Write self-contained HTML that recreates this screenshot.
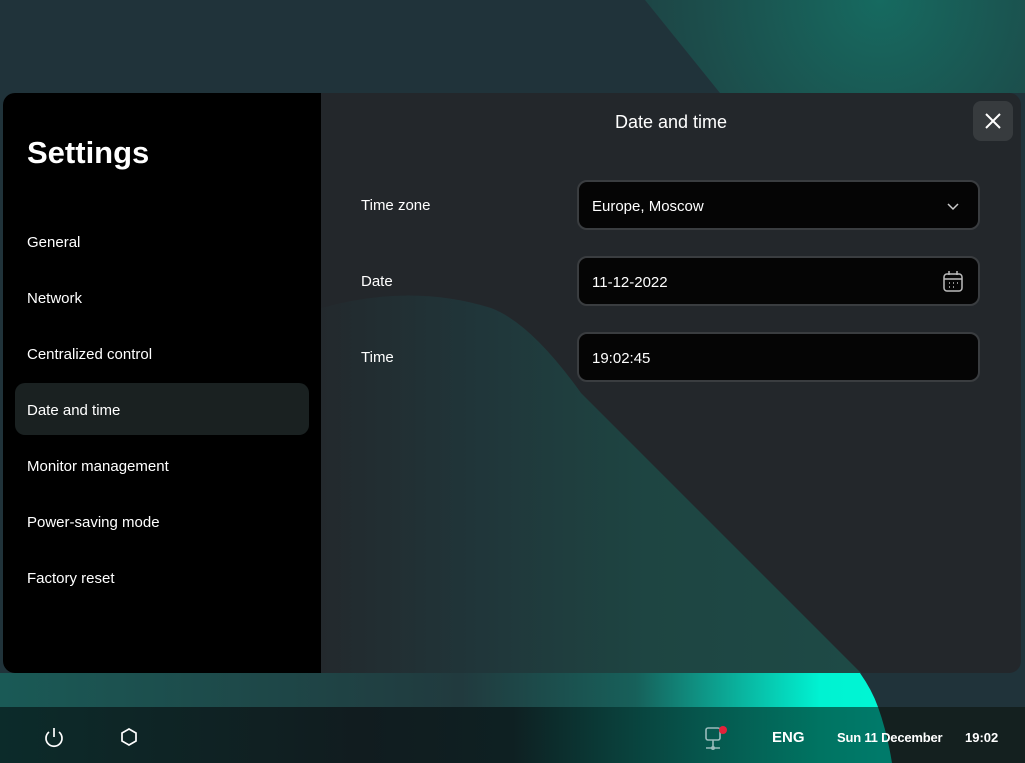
<!DOCTYPE html>
<html><head><meta charset="utf-8"><style>
*{margin:0;padding:0;box-sizing:border-box}
body{width:1025px;height:763px;overflow:hidden;position:relative;background:#20333a;font-family:"Liberation Sans",sans-serif;color:#fff}
.abs{position:absolute}
.side{left:3px;top:93px;width:318px;height:580px;background:#000;border-radius:12px 0 0 12px}
.main{left:321px;top:93px;width:700px;height:580px;background:#23272b;border-radius:0 12px 12px 0;overflow:hidden}
.item{position:absolute;left:24px;font-size:15px}
.lab{position:absolute;left:40px;font-size:15px}
.field{position:absolute;left:256px;width:403px;height:50px;background:#050505;border:2px solid #3a3d40;border-radius:10px;font-size:15px;padding-left:13px;line-height:50px}
.tb{left:0;top:707px;width:1025px;height:56px;background:linear-gradient(90deg,#0c2b2a 0%,#111c1f 35%,#0e2022 50%,#06554c 68%,#007462 80%,#007a6a 86%)}
</style></head><body>
<svg class="abs" style="left:0;top:0" width="1025" height="763">
<defs>
<radialGradient id="g1" cx="880" cy="0" r="300" gradientUnits="userSpaceOnUse"><stop offset="0" stop-color="#166a60"/><stop offset="0.6" stop-color="#1c4d4b"/><stop offset="1" stop-color="#1f3d40"/></radialGradient>
<linearGradient id="g2" x1="0" x2="1"><stop offset="0" stop-color="#1a5a56"/><stop offset="0.45" stop-color="#213a3e"/><stop offset="0.62" stop-color="#17605a"/><stop offset="0.8" stop-color="#00f2d2"/><stop offset="1" stop-color="#00ffd8"/></linearGradient>
</defs>
<rect width="1025" height="763" fill="#20333a"/>
<path d="M645 0 L1025 0 L1025 93 L720 93 Z" fill="url(#g1)"/>
<rect x="0" y="673" width="1025" height="34" fill="url(#g2)"/>
<path d="M860 673 Q872 690 878 707 L1025 707 L1025 673 Z" fill="#20333a"/>
</svg>
<div class="abs side">
<div class="abs" style="left:24px;top:42px;font-size:31px;font-weight:bold">Settings</div>
<div class="abs" style="left:12px;top:290px;width:294px;height:52px;background:#1a2121;border-radius:10px"></div>
<div class="item" style="top:141px">General</div>
<div class="item" style="top:197px">Network</div>
<div class="item" style="top:253px">Centralized control</div>
<div class="item" style="top:309px">Date and time</div>
<div class="item" style="top:365px">Monitor management</div>
<div class="item" style="top:421px">Power-saving mode</div>
<div class="item" style="top:477px">Factory reset</div>
</div>
<div class="abs main">
<svg class="abs" style="left:0;top:0" width="700" height="580">
<defs><linearGradient id="g3" x1="0" y1="0" x2="540" y2="0" gradientUnits="userSpaceOnUse"><stop offset="0" stop-color="#23292d"/><stop offset="0.3" stop-color="#20363a"/><stop offset="0.6" stop-color="#1e4542"/><stop offset="1" stop-color="#1e4a46"/></linearGradient></defs>
<path d="M0 215 Q90 190 170 215 Q210 230 260 300 L540 580 L0 580 Z" fill="url(#g3)"/>
</svg>
<div class="abs" style="left:0;width:700px;top:19px;text-align:center;font-size:18px">Date and time</div>
<div class="abs" style="left:652px;top:8px;width:40px;height:40px;background:#373b3e;border-radius:8px">
<svg width="40" height="40"><path d="M13 13 L27 27 M27 13 L13 27" stroke="#fff" stroke-width="2"/></svg></div>
<div class="lab" style="top:104px">Time zone</div>
<div class="lab" style="top:180px">Date</div>
<div class="lab" style="top:256px">Time</div>
<div class="field" style="top:87px">Europe, Moscow
<svg class="abs" style="right:18px;top:20px" width="14" height="10"><path d="M2 2 L7 7 L12 2" stroke="#ccc" stroke-width="1.5" fill="none"/></svg></div>
<div class="field" style="top:163px">11-12-2022
<svg class="abs" style="right:14px;top:12px" width="22" height="24"><rect x="2" y="4" width="18" height="17" rx="3" stroke="#bbb" stroke-width="1.5" fill="none"/><path d="M2 9 H20 M7 1 V5 M15 1 V5" stroke="#bbb" stroke-width="1.5"/><path d="M7 13h1M11 13h1M15 13h1M7 17h1M11 17h1" stroke="#bbb" stroke-width="1.5"/></svg></div>
<div class="field" style="top:239px">19:02:45</div>
</div>
<div class="abs tb">
<svg class="abs" style="left:0;top:0" width="1025" height="56"><path d="M878 0 Q887 25 892 56 L1025 56 L1025 0 Z" fill="#14201f"/>
<path d="M49 25 A8 8 0 1 0 59 25 M54 21 V30" stroke="#fff" stroke-width="1.7" fill="none"/>
<path d="M129 22 L136 26 L136 34 L129 38 L122 34 L122 26 Z" stroke="#fff" stroke-width="1.7" fill="none"/>
<rect x="706" y="21" width="14" height="12" rx="2" stroke="#9bb" stroke-width="1.6" fill="none"/>
<path d="M713 33 V42 M706 41 H720" stroke="#9bb" stroke-width="1.6"/><circle cx="713" cy="41" r="2" fill="#9bb"/>
<circle cx="723" cy="23" r="4" fill="#e5213a"/></svg>
<div class="abs" style="left:772px;top:22px;font-size:15px;font-weight:bold">ENG</div>
<div class="abs" style="left:837px;top:23px;font-size:13px;font-weight:bold;letter-spacing:-0.2px">Sun 11 December</div>
<div class="abs" style="left:965px;top:23px;font-size:13px;font-weight:bold">19:02</div>
</div>
</body></html>
